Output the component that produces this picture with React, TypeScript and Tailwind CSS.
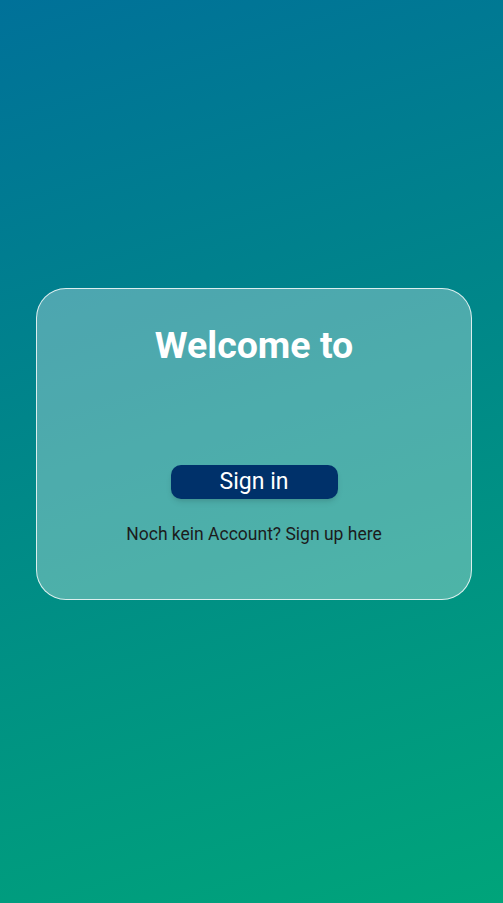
import React from 'react'

function App() {
    return (
        <div
            className="min-h-[903px] w-full flex flex-col items-start justify-center pb-[15px] pl-[36px]"
            style={{ fontFamily: 'Roboto, "Noto Sans", sans-serif', backgroundImage: 'linear-gradient(162deg, #007199 0%, #00858a 40%, #00a47a 100%)' }}
        >
            {/* card */}
            <div className="w-[436px] h-[312px] rounded-[30px] border border-white/80 bg-white/30 flex flex-col items-center pt-[30px]">
                <h1 className="text-[37.5px] leading-[52px] font-bold text-white">Welcome to</h1>

                <button className="mt-[94px] w-[167px] h-[34px] rounded-[10px] bg-[#00316a] text-white text-[23px] leading-[34px] shadow-md">
                    Sign in
                </button>

                <p className="mt-[23px] text-[17.5px] leading-[24px] text-[#1c1c1c]">
                    Noch kein Account? Sign up here
                </p>
            </div>
        </div>
    )
}

export default App
